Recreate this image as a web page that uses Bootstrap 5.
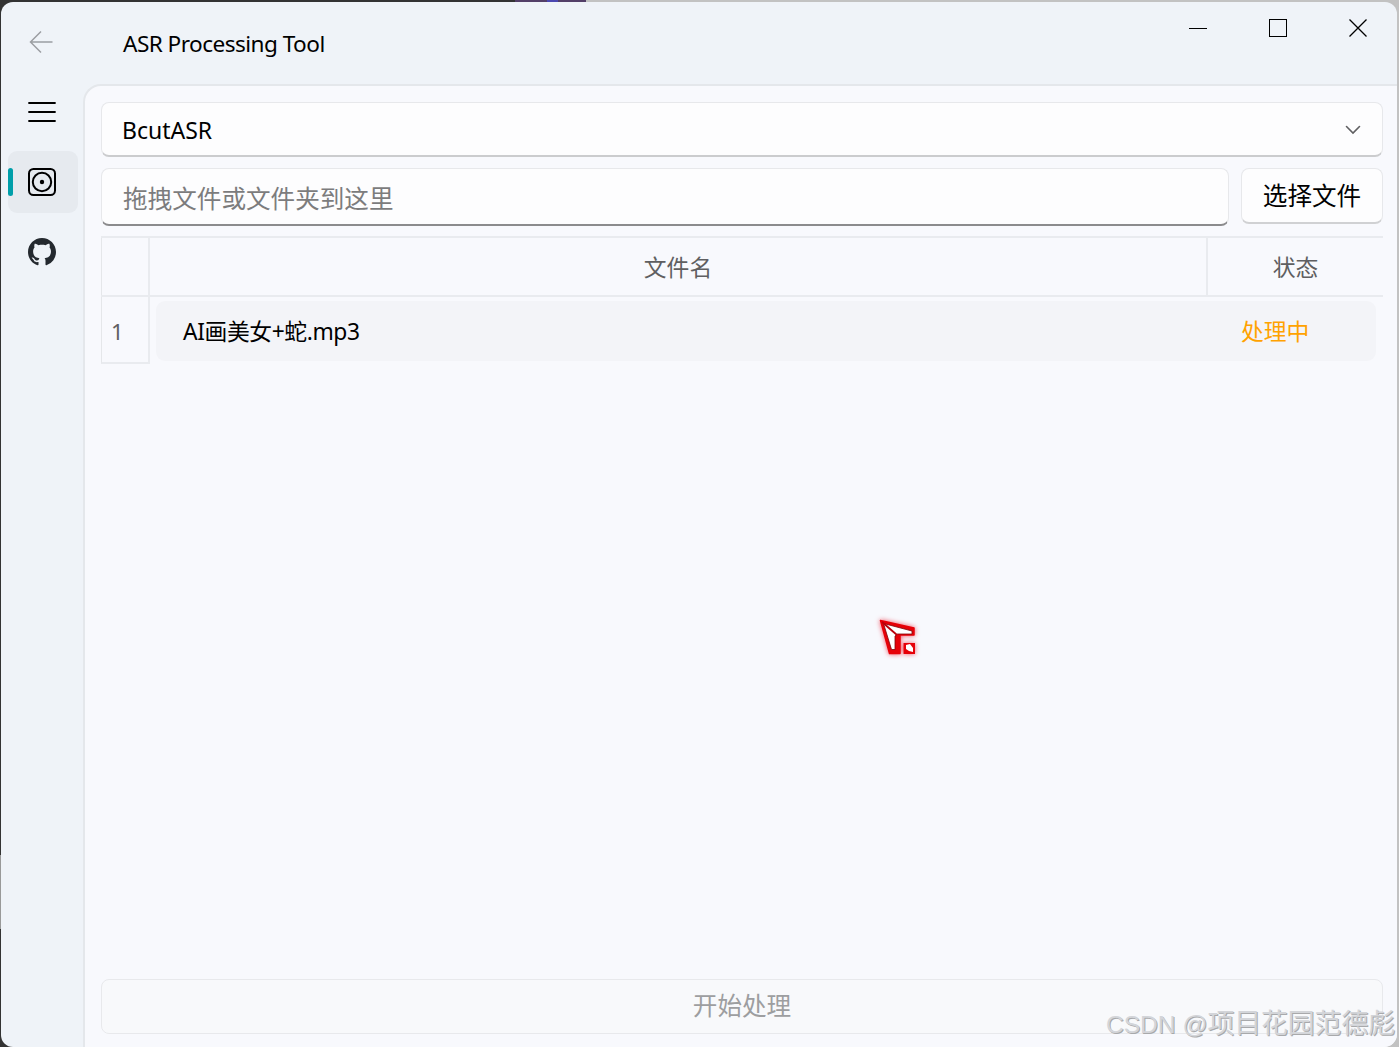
<!DOCTYPE html>
<html lang="zh-CN">
<head>
<meta charset="utf-8">
<title>ASR Processing Tool</title>
<link href="https://cdn.jsdelivr.net/npm/bootstrap@5.3.0/dist/css/bootstrap.min.css" rel="stylesheet">
<style>
html,body{height:100%;overflow:hidden}
body{font-family:"Noto Sans","Noto Sans CJK SC",sans-serif;color:#000;font-size:24.6px;line-height:1;
 background:linear-gradient(#999,#999) 0 855px/1px 74px no-repeat,linear-gradient(90deg,#333 0 515px,#533f68 515px 547px,#4b47b0 547px 558px,#533f68 558px 586px,#c2c2c2 586px)}
.app-window{margin:2px 2px 0 1px;height:1045px;background:#eff3f8;border-radius:12px 12px 13px 12px;overflow:hidden;position:relative}
.title-bar{height:82px;flex:none}
.back-btn{width:82px;padding-left:28px;padding-top:28px}
.app-title{font-size:22.6px;letter-spacing:-.54px;padding:30px 0 0 40px;line-height:24px}
.win-controls{height:52px;margin-right:-1px}
.win-controls button,.side-nav button,.back-btn button{border:0;background:none;padding:0;display:flex;align-items:center;justify-content:center}
.win-controls button{width:80px}
.side-nav{width:82px;flex:none;padding:0 0 0 7px}
.side-nav button{width:70px;height:62px;border-radius:9px;margin-bottom:8px;padding-right:2px;position:relative}
.side-nav button:first-child{margin-top:-3px}
.side-nav button.current{background:#e6eaef}
.side-nav button.current::before{content:"";position:absolute;left:0;top:17px;width:5px;height:28px;border-radius:3px;background:#009faa}
.page-panel{background:#f8f9fd;border:2px solid #e4e7eb;border-width:2px 0 0 2px;border-radius:18px 0 0 0;padding:16px 14px 13px 16px;min-width:0}
.fluent-field{background:#fdfdfe;border:1.5px solid #e7e8eb;border-radius:8px;padding:0 20px}
.engine-select{height:55px;border-bottom:2px solid #cbccce;font-size:23px;margin-bottom:11px;padding-right:21px;padding-top:2px}
.drop-input{height:58px;border-bottom:2px solid #8b8b8d;color:#7c7c7d;padding-top:5px;padding-left:21px;margin-right:12px}
.pick-btn{width:142px;height:56px;border-bottom:2px solid #d0d1d3;justify-content:center;padding:2px 0 0;color:#000}
.file-table{margin-top:10px;font-size:22.8px;color:#5f5f61}
.file-table .head-line{height:61px;border-top:2px solid #e9ebef;border-bottom:2px solid #e9ebef}
.idx{width:49px;flex:none;border-left:1px solid #e5e7ea;border-right:2px solid #e9ebef}
.state-head{width:177px;flex:none;border-left:2px solid #e9ebef}
.body-line{height:67px}
.body-line .idx{border-bottom:2px solid #e9ebef;padding-left:9px;padding-top:3px;font-size:22px}
.file-pill{background:#f3f4f8;border-radius:9px;margin:4px 7px 3px 6px;color:#000;padding-left:27px;padding-top:3px}
.file-name{letter-spacing:-.4px}
.state-cell{width:135px;color:#ffa200}
.start-btn{height:55px;border:1.5px solid #e8e9ec;border-radius:8px;color:#9d9ea0;background:#f8f9fb;padding-top:1px}
.pointer-art{position:absolute;left:868px;top:606px;filter:drop-shadow(0 0 2.5px #f05060)}
.watermark{position:absolute;right:2px;bottom:7px;font-family:"Liberation Sans","Noto Sans CJK SC",sans-serif;font-size:26.8px;line-height:30px;color:#d3d5d9;text-shadow:1px 1px 0 #a8a9ab;white-space:nowrap}
.watermark span{font-size:24.6px}
</style>
<script src="https://cdn.jsdelivr.net/npm/bootstrap@5.3.0/dist/js/bootstrap.bundle.min.js"></script>
</head>
<body>
<div class="app-window d-flex flex-column">
 <header class="title-bar d-flex">
  <div class="back-btn"><button aria-label="Back"><svg width="24" height="24" fill="none" stroke="#9b9ea2" stroke-width="1.5"><path d="M12 1.5 1.5 12 12 22.500M1.500 12H23.500"/></svg></button></div>
  <div class="app-title">ASR Processing Tool</div>
  <div class="win-controls d-flex ms-auto">
   <button aria-label="Minimize"><svg width="18" height="18"><path d="M0 9.500H18" stroke="#000"/></svg></button>
   <button aria-label="Maximize"><svg width="18" height="18"><rect x=".5" y=".5" width="17" height="17" fill="none" stroke="#000"/></svg></button>
   <button aria-label="Close"><svg width="18" height="18"><path d="M.5.5l17 17M17.500.5l-17 17" stroke="#000" stroke-width="1.300"/></svg></button>
  </div>
 </header>
 <div class="d-flex flex-grow-1">
  <nav class="side-nav">
   <button aria-label="Menu"><svg width="28" height="22" stroke="#000" stroke-width="1.800" stroke-linecap="round"><path d="M1 2H27M1 11H27M1 20H27"/></svg></button>
   <button class="current" aria-label="ASR"><svg width="28" height="28" fill="none" stroke="#000" stroke-width="2"><rect x="1" y="1" width="26" height="26" rx="4.500"/><circle cx="14" cy="14" r="9.200"/><circle cx="14" cy="14" r="2.200" fill="#000" stroke="none"/></svg></button>
   <button aria-label="GitHub"><svg width="28" height="28" viewBox="0 0 16 16" fill="#24292f"><path d="M8 0C3.580 0 0 3.580 0 8c0 3.540 2.290 6.530 5.470 7.590.4.070.55-.17.55-.38 0-.19-.01-.82-.01-1.490-2.010.37-2.530-.49-2.690-.94-.09-.23-.48-.94-.82-1.130-.28-.15-.68-.52-.01-.53.63-.01 1.080.58 1.230.82.72 1.210 1.870.87 2.330.66.07-.52.28-.87.51-1.070-1.780-.2-3.640-.89-3.640-3.950 0-.87.31-1.590.82-2.150-.08-.2-.36-1.020.08-2.120 0 0 .67-.21 2.200.82.64-.18 1.320-.27 2-.27s1.360.09 2 .27c1.530-1.040 2.200-.82 2.200-.82.44 1.100.16 1.920.08 2.120.51.56.82 1.270.82 2.150 0 3.070-1.870 3.750-3.650 3.950.29.25.54.73.54 1.480 0 1.070-.01 1.930-.01 2.200 0 .21.15.46.55.38A8.010 8.010 0 0 0 16 8c0-4.420-3.580-8-8-8z"/></svg></button>
  </nav>
  <main class="page-panel d-flex flex-column flex-grow-1">
   <div class="fluent-field engine-select d-flex align-items-center justify-content-between"><span>BcutASR</span>
    <svg width="16" height="10" fill="none" stroke="#5f5f61" stroke-width="1.600" stroke-linecap="round"><path d="m1.500 1.500 6.500 6.500 6.500-6.500"/></svg></div>
   <div class="d-flex align-items-start">
    <div class="fluent-field drop-input d-flex align-items-center flex-grow-1">拖拽文件或文件夹到这里</div>
    <button class="fluent-field pick-btn d-flex align-items-center">选择文件</button>
   </div>
   <div class="file-table">
    <div class="head-line d-flex"><div class="idx"></div>
     <div class="flex-grow-1 d-flex align-items-center justify-content-center pt-1">文件名</div>
     <div class="state-head d-flex align-items-center justify-content-center pt-1">状态</div></div>
    <div class="body-line d-flex"><div class="idx d-flex align-items-center">1</div>
     <div class="file-pill flex-grow-1 d-flex align-items-center justify-content-between"><span class="file-name">AI画美女+蛇.mp3</span><span class="state-cell">处理中</span></div></div>
   </div>
   <button class="start-btn w-100 mt-auto">开始处理</button>
  </main>
 </div>
 <svg class="pointer-art" width="56" height="56" viewBox="0 0 56 56"><path d="M11.500 12.500 45 20V27H31V45.500H20.500Z" fill="#e60008" stroke="#e60008" stroke-width="1.500" stroke-linejoin="round"/><path d="M14.500 15.500 43 23v3H28.500L26 28v13.500H22.500Z" fill="#fff" stroke="#7d0508" stroke-width=".8"/><path d="m13 14 15 13" stroke="#b8000a" stroke-width="1.800"/><path d="M34.500 35H46V46H34.500Z" fill="#e60008"/><path d="m37 37 4-1 3 4v4l-4-1-3-2Z" fill="#fff"/></svg>
 <div class="watermark"><span>CSDN @</span>项目花园范德彪</div>
</div>
</body>
</html>
